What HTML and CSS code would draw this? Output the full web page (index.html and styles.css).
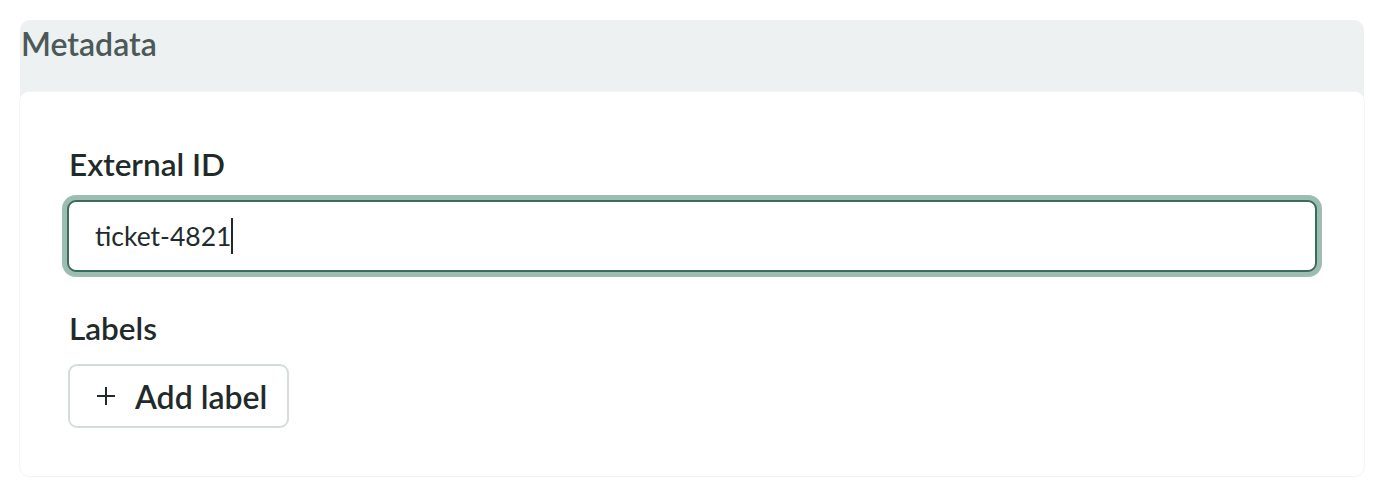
FILE: index.html
```html
<!DOCTYPE html>
<html lang="en">
<head>
<meta charset="utf-8">
<title>Metadata</title>
<link rel="stylesheet" href="styles.css">
</head>
<body>
<section class="panel">
  <header class="panel-header">Metadata</header>
  <div class="card">
    <div class="field">
      <label class="field-label" for="ext-id">External ID</label>
      <div class="input-wrap">
        <input id="ext-id" class="text-input" type="text" value="ticket-4821"><span class="caret"></span>
      </div>
    </div>
    <div class="field labels-field">
      <span class="field-label">Labels</span>
      <button class="add-btn" type="button">
        <svg class="plus" width="20" height="20" viewBox="0 0 20 20"><path d="M10 1v18M1 10h18" stroke="#1f2a2a" stroke-width="2" fill="none"/></svg>
        <span>Add label</span>
      </button>
    </div>
  </div>
</section>
</body>
</html>
```

FILE: styles.css
```css
* { box-sizing: border-box; }
html, body { margin: 0; padding: 0; background: #ffffff; }
body { font-family: "Lato", "Noto Sans", sans-serif; color: #1f2b2b; }

.panel {
  margin: 20px;
  background: #eef1f1;
  border-radius: 10px;
}
.panel-header {
  height: 72px;
  padding: 4px 0 0 1px;
  font-size: 32px;
  line-height: 40px;
  font-weight: 600;
  color: #4b5958;
}
.card {
  background: #ffffff;
  border-radius: 9px;
  box-shadow: 0 0 0 1px #f3f5f5;
  padding: 54px 48px 48px 48px;
  display: flex;
  flex-direction: column;
  gap: 38px;
}
.field { display: flex; flex-direction: column; gap: 18px; }
.field-label {
  font-size: 31.5px;
  line-height: 36px;
  font-weight: 600;
  color: #1f2b2b;
  padding-left: 1px;
}
.input-wrap { position: relative; margin: 0 -1px; }
.text-input {
  display: block;
  width: 100%;
  height: 72px;
  border: 2px solid #3b6b5b;
  border-radius: 9px;
  box-shadow: 0 0 0 5px #9dbdb2;
  padding: 0 24px 0 26px;
  font-family: inherit;
  font-size: 26.5px;
  color: #1f2b2b;
  background: #fff;
  outline: none;
}
.caret {
  position: absolute;
  left: 164px;
  top: 18px;
  width: 2px;
  height: 36px;
  background: #1f2b2b;
}
.labels-field { gap: 18px; }
.add-btn {
  align-self: flex-start;
  display: flex;
  align-items: center;
  gap: 19px;
  height: 64px;
  padding: 0 20px 0 26px;
  border: 2px solid #d5dcdc;
  border-radius: 9px;
  background: #fff;
  font-family: inherit;
  font-size: 32px;
  font-weight: 600;
  color: #1f2b2b;
}
.plus { display: block; }
```
